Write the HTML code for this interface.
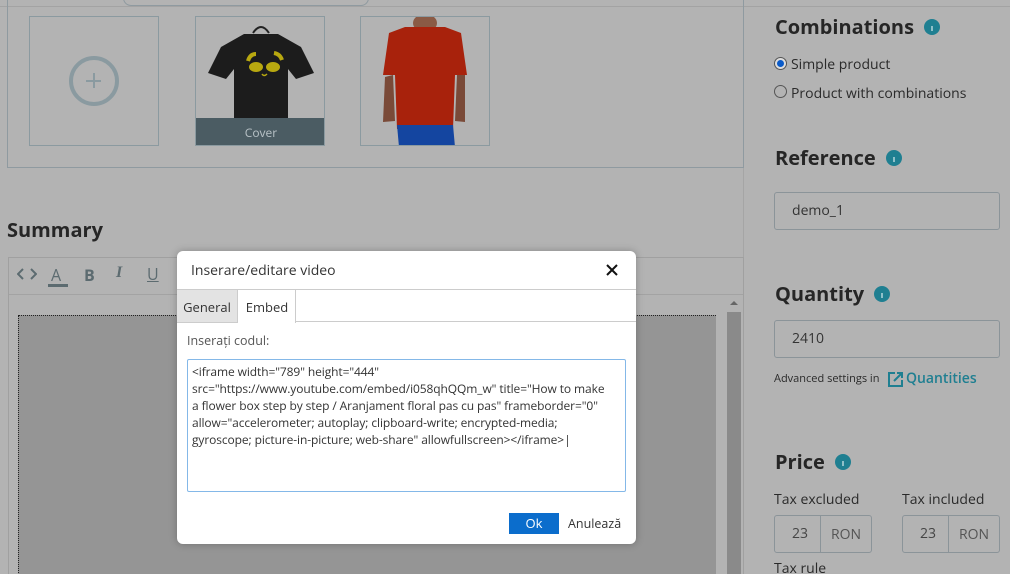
<!DOCTYPE html>
<html><head><meta charset="utf-8"><style>
*{margin:0;padding:0;box-sizing:border-box}
html,body{width:1010px;height:574px;overflow:hidden}
body{background:#b3b3b3;font-family:"Open Sans","Liberation Sans",sans-serif;position:relative;color:#2a2a2a}
.a{position:absolute}
.h{font-weight:bold;font-size:20px;color:#262626}
.info{display:inline-block;width:16px;height:16px;border-radius:50%;background:#1f7f91;vertical-align:middle;margin-left:10px;position:relative;top:-2px}
.info:after{content:"";position:absolute;left:7px;top:7px;width:2px;height:5px;background:#8fc0c9}
.inp{border:1px solid #8b9499;border-radius:3px;background:#b3b3b3;font-size:14px;color:#333;padding-left:17px;line-height:35px}
.tile{border:1px solid #8b9aa0;background:#b3b3b3}
</style></head><body>
<div class="a" style="left:0;top:0;width:1010px;height:7px;border-bottom:1px solid #a3a3a3"></div>
<div class="a" style="left:123px;top:-10px;width:246px;height:16px;border:1px solid #8f9aa0;border-radius:8px"></div>
<div class="a" style="left:743px;top:7px;width:1px;height:567px;background:#a5a5a5"></div>
<div class="a" style="left:7px;top:-5px;width:737px;height:173px;border:1px solid #8f9aa0"></div>
<div class="a tile" style="left:29px;top:16px;width:130px;height:130px"></div>
<div class="a" style="left:69px;top:56px;width:50px;height:50px;border:4px solid #8a9aa0;border-radius:50%"></div>
<div class="a" style="left:86px;top:80px;width:15px;height:2px;background:#8a9aa0"></div>
<div class="a" style="left:92.5px;top:73px;width:2px;height:15px;background:#8a9aa0"></div>
<div class="a tile" style="left:195px;top:16px;width:130px;height:130px;overflow:hidden">
 <svg width="130" height="130" class="a" style="left:0;top:0">
  <path d="M57 16 Q65 4 73 16" stroke="#222" fill="none" stroke-width="2"/>
  <path d="M48 17 L82 17 L105 30 L118 56 L100 62 L92 52 L92 101 L38 101 L38 52 L30 62 L12 56 L25 30 Z" fill="#1c1c1c"/>
  <ellipse cx="60" cy="50" rx="7" ry="5" fill="#b8a810"/><ellipse cx="77" cy="50" rx="7" ry="5" fill="#b8a810"/>
  <path d="M52 44 Q54 37 60 37 M78 36 Q84 37 86 43" stroke="#b8a810" stroke-width="4" fill="none"/>
  <path d="M66 57 Q68 60 71 57" stroke="#b8a810" stroke-width="1.5" fill="none"/>
 </svg>
 <div class="a" style="left:0;top:101px;width:130px;height:29px;background:#4b5c63;color:#b8c2c6;font-size:12px;text-align:center;line-height:29px">Cover</div>
</div>
<div class="a tile" style="left:360px;top:16px;width:130px;height:130px;overflow:hidden">
 <svg width="130" height="130" class="a" style="left:0;top:0">
  <ellipse cx="64" cy="6" rx="12" ry="9" fill="#8a5a45"/>
  <path d="M22 105 L24 60 L32 58 L34 104 Z M104 105 L104 58 L96 58 L94 104 Z" fill="#7a4a38"/>
  <path d="M44 10 L84 10 L100 16 L106 58 L94 58 L92 112 L36 112 L34 58 L22 58 L28 16 Z" fill="#a8220c"/>
  <path d="M36 108 L92 108 L94 130 L38 130 Z" fill="#1445a0"/>
 </svg>
</div>
<div class="a h" style="left:7px;top:216px">Summary</div>
<div class="a" style="left:8px;top:257px;width:736px;height:330px;border:1px solid #a0a0a0"></div>
<div class="a" style="left:9px;top:294px;width:734px;height:1px;background:#a3a3a3"></div>
<svg class="a" style="left:17px;top:268px" width="20" height="12"><path d="M6 1L1 6L6 11M14 1L19 6L14 11" stroke="#5c6b70" stroke-width="2" fill="none"/></svg>
<div class="a" style="left:51px;top:264px;font-size:16px;color:#5c6b70">A</div>
<div class="a" style="left:48px;top:284px;width:20px;height:3px;background:#5c6b70"></div>
<div class="a" style="left:84px;top:264px;font-size:16px;font-weight:bold;color:#5c6b70">B</div>
<div class="a" style="left:116px;top:264px;font-size:16px;font-weight:bold;font-style:italic;color:#5c6b70;font-family:'Liberation Serif',serif">I</div>
<div class="a" style="left:147px;top:263px;font-size:16px;color:#5c6b70;text-decoration:underline">U</div>
<div class="a" style="left:18px;top:315px;width:698px;height:260px;background:#959595;border-top:1px dotted #222;border-left:1px dotted #222"></div>
<div class="a" style="left:727px;top:312px;width:14px;height:262px;background:#8a8a8a"></div>
<div class="a" style="left:730px;top:301px;width:0;height:0;border-left:4px solid transparent;border-right:4px solid transparent;border-bottom:4px solid #666"></div>
<div class="a h" style="left:775px;top:13px">Combinations<span class="info"></span></div>
<div class="a" style="left:774px;top:57px;width:13px;height:13px;border-radius:50%;border:1px solid #555;background:#ddd"></div>
<div class="a" style="left:777px;top:60px;width:7px;height:7px;border-radius:50%;background:#0a5ac8"></div>
<div class="a" style="left:791px;top:55px;font-size:14px">Simple product</div>
<div class="a" style="left:774px;top:85px;width:13px;height:13px;border-radius:50%;border:1px solid #555"></div>
<div class="a" style="left:791px;top:84px;font-size:14px">Product with combinations</div>
<div class="a h" style="left:775px;top:144px">Reference<span class="info"></span></div>
<div class="a inp" style="left:774px;top:192px;width:226px;height:38px">demo_1</div>
<div class="a h" style="left:775px;top:280px">Quantity<span class="info"></span></div>
<div class="a inp" style="left:774px;top:320px;width:226px;height:38px">2410</div>
<div class="a" style="left:774px;top:371px;font-size:11px">Advanced settings in</div>
<svg class="a" style="left:887px;top:371px" width="17" height="17"><path d="M8 2H2V15H15V9" stroke="#1f7f91" stroke-width="2" fill="none"/><path d="M7 10L15 2M10 2H15V7" stroke="#1f7f91" stroke-width="2" fill="none"/></svg>
<div class="a" style="left:906px;top:369px;font-size:14px;color:#1f7f91;font-weight:600">Quantities</div>
<div class="a h" style="left:775px;top:448px">Price<span class="info"></span></div>
<div class="a" style="left:774px;top:490px;font-size:14px">Tax excluded</div>
<div class="a" style="left:902px;top:490px;font-size:14px">Tax included</div>
<div class="a inp" style="left:774px;top:515px;width:98px;height:38px;color:#444">23</div>
<div class="a" style="left:820px;top:516px;width:1px;height:36px;background:#8b9499"></div>
<div class="a" style="left:831px;top:525px;font-size:14px;color:#555">RON</div>
<div class="a inp" style="left:902px;top:515px;width:98px;height:38px;color:#444">23</div>
<div class="a" style="left:948px;top:516px;width:1px;height:36px;background:#8b9499"></div>
<div class="a" style="left:959px;top:525px;font-size:14px;color:#555">RON</div>
<div class="a" style="left:774px;top:559px;font-size:14px">Tax rule</div>
<div class="a" style="left:177px;top:251px;width:459px;height:293px;background:#fff;border-radius:6px;box-shadow:0 0 8px rgba(0,0,0,.25)">
 <div class="a" style="left:14px;top:10px;font-size:14px;color:#333">Inserare/editare video</div>
 <svg class="a" style="left:429px;top:13px" width="12" height="12"><path d="M1 1L11 11M11 1L1 11" stroke="#111" stroke-width="2"/></svg>
 <div class="a" style="left:0;top:38px;width:459px;height:1px;background:#ccc"></div>
 <div class="a" style="left:0;top:39px;width:61px;height:32px;background:#e3e3e3;border-right:1px solid #ccc;font-size:13px;color:#333;text-align:center;line-height:34px">General</div>
 <div class="a" style="left:62px;top:39px;width:57px;height:33px;background:#fff;border-right:1px solid #ccc;font-size:13px;color:#333;text-align:center;line-height:34px">Embed</div>
 <div class="a" style="left:119px;top:70px;width:340px;height:1px;background:#ccc"></div>
 <div class="a" style="left:0;top:71px;width:61px;height:1px;background:#ccc"></div>
 <div class="a" style="left:10px;top:81px;font-size:12.5px;color:#555">Inserați codul:</div>
 <div class="a" style="left:10px;top:108px;width:439px;height:133px;border:1px solid #84b8e8;border-radius:2px;padding:3px 4px;font-size:12px;line-height:17px;color:#333;white-space:nowrap;letter-spacing:-0.1px">&lt;iframe width="789" height="444"<br>src="https://www.youtube.com/embed/i058qhQQm_w" title="How to make<br>a flower box step by step / Aranjament floral pas cu pas" frameborder="0"<br>allow="accelerometer; autoplay; clipboard-write; encrypted-media;<br>gyroscope; picture-in-picture; web-share" allowfullscreen&gt;&lt;/iframe&gt;|</div>
 <div class="a" style="left:332px;top:262px;width:50px;height:21px;background:#0b6dcc;color:#fff;font-size:13px;text-align:center;line-height:21px">Ok</div>
 <div class="a" style="left:391px;top:264px;font-size:12.5px;color:#333">Anulează</div>
</div>
</body></html>
